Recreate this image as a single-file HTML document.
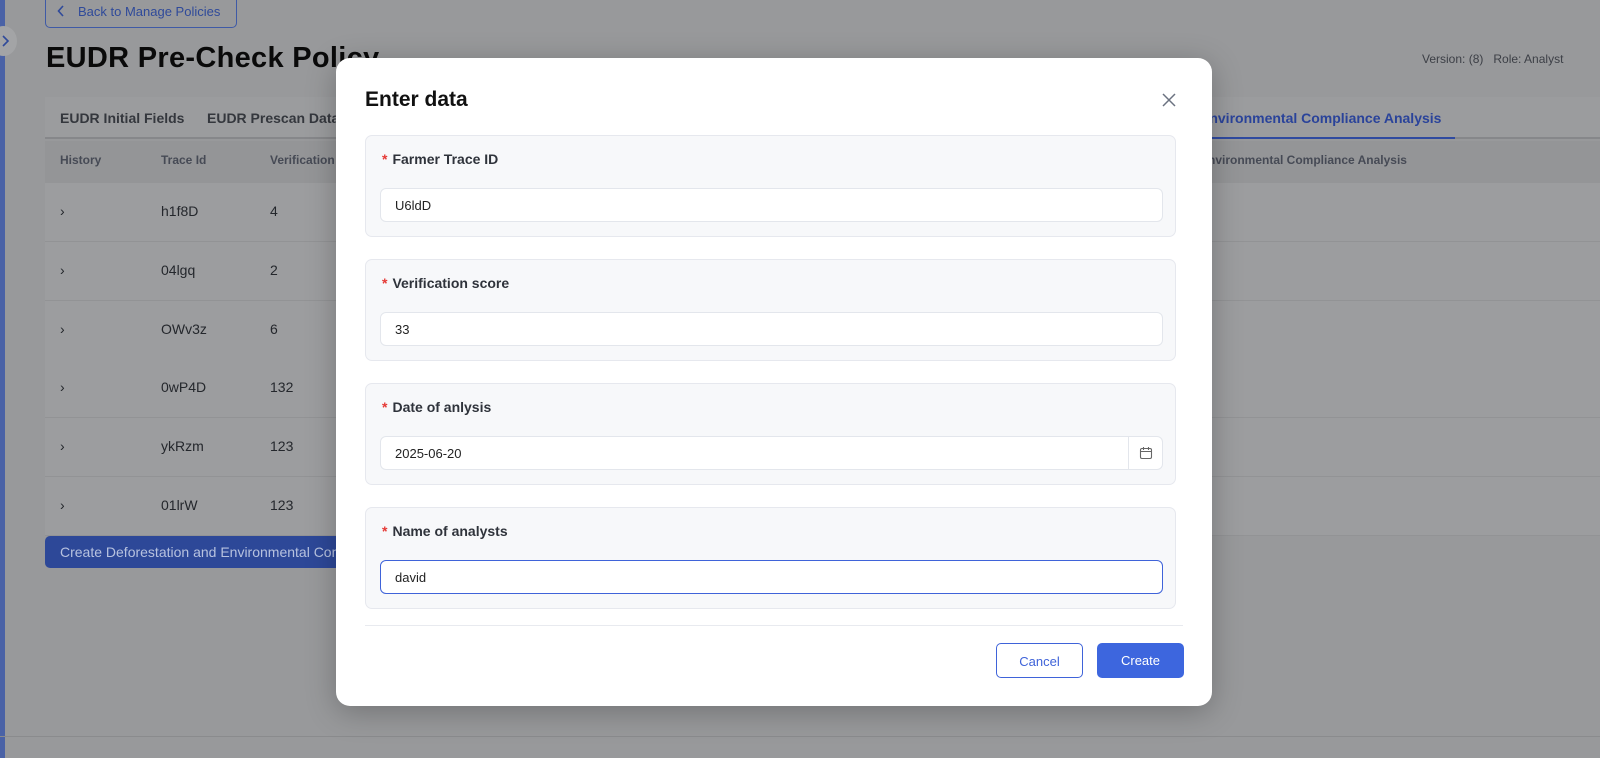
<!DOCTYPE html>
<html><head><style>
*{box-sizing:border-box;margin:0;padding:0}
body{width:1600px;height:758px;overflow:hidden;background:#98999b;font-family:"Liberation Sans",sans-serif;position:relative}
.a{position:absolute}
.side{left:0;top:0;width:5px;height:758px;background:#4a62a6}
.tog{left:-10px;top:26px;width:27px;height:30px;border-radius:50%;background:#a3a4a6}
.back{left:45px;top:-6px;width:192px;height:34px;border:1px solid #3f5aa6;border-radius:5px;color:#2f4a9a;font-size:13px;padding:9px 0 0 32px}
h1{position:absolute;left:46px;top:42px;font-size:29px;font-weight:bold;color:#0a0a0a;letter-spacing:.3px}
.ver{top:52px;left:1422px;font-size:12px;color:#3c3f46;white-space:nowrap}
.tabs{left:45px;top:97px;width:1555px;height:42px;background:#9b9c9e;border-bottom:2px solid #86878a}
.tab{top:110px;font-size:14px;font-weight:bold;color:#34373d}
.hdr{left:45px;top:141px;width:1555px;height:42px;background:#949597}
.hd{top:153px;font-size:12px;font-weight:bold;color:#464a55}
.row{left:45px;width:1555px;height:59px;background:#9c9d9f;border-bottom:1px solid #929395}
.c{font-size:14px;color:#24272c}
.btn{left:45px;top:536px;width:420px;height:32px;background:#2d4898;border-radius:5px;color:#b7c2df;font-size:14px;padding:8px 0 0 15px}
.bot{left:0;top:736px;width:1600px;height:1px;background:#8a8b8d}
.modal{left:336px;top:58px;width:876px;height:648px;background:#fff;border-radius:14px;box-shadow:0 6px 30px rgba(0,0,0,.25)}
.mt{left:29px;top:30px;font-size:21px;font-weight:bold;color:#111}
.sec{left:29px;width:811px;height:102px;background:#f7f8fa;border:1px solid #e6e8ee;border-radius:7px}
.lab{position:absolute;left:16px;top:15px;font-size:14px;font-weight:bold;color:#2f333b}
.lab b{color:#e53935;margin-right:5px}
.inp{position:absolute;left:14px;top:52px;width:783px;height:34px;background:#fff;border:1px solid #e3e6ec;border-radius:6px;font-size:13px;color:#222;padding:9px 0 0 14px}
.cal{position:absolute;right:0;top:0;width:34px;height:32px;border-left:1px solid #e3e6ec}
.div{left:29px;top:567px;width:818px;height:1px;background:#e8eaef}
.b1{left:660px;top:585px;width:87px;height:35px;border:1px solid #3f63d9;border-radius:5px;color:#3f63d9;font-size:13px;text-align:center;padding-top:10px}
.b2{left:761px;top:585px;width:87px;height:35px;background:#3d66de;border-radius:5px;color:#fff;font-size:13px;text-align:center;padding-top:10px}
</style></head><body>
<div class="a side"></div>
<div class="a tog"><svg class="a" style="left:10px;top:8px" width="12" height="14" viewBox="0 0 12 14"><path d="M3 2l5 5-5 5" fill="none" stroke="#2f4a9a" stroke-width="1.6"/></svg></div>
<div class="a back"><svg class="a" style="left:11px;top:10px" width="8" height="12" viewBox="0 0 8 12"><path d="M6 1L1.5 6 6 11" fill="none" stroke="#2f4a9a" stroke-width="1.6"/></svg>Back to Manage Policies</div>
<h1>EUDR Pre-Check Policy</h1>
<div class="a ver">Version: (8)&nbsp;&nbsp;&nbsp;Role: Analyst</div>
<div class="a tabs"></div>
<div class="a tab" style="left:60px">EUDR Initial Fields</div>
<div class="a tab" style="left:207px">EUDR Prescan Data</div>
<div class="a tab" style="left:1200px;color:#2a439a">Environmental Compliance Analysis</div>
<div class="a" style="left:1200px;top:137px;width:255px;height:2px;background:#2f4aa0"></div>
<div class="a hdr"></div>
<div class="a hd" style="left:60px">History</div>
<div class="a hd" style="left:161px">Trace Id</div>
<div class="a hd" style="left:270px">Verification</div>
<div class="a hd" style="left:1200px">Environmental Compliance Analysis</div>
<div class="a row" style="top:183px"></div><div class="a row" style="top:242px"></div><div class="a row" style="top:301px"></div><div class="a row" style="top:359px"></div><div class="a row" style="top:418px"></div><div class="a row" style="top:477px"></div>
<div class="a c" style="left:60px;top:203px">›</div><div class="a c" style="left:161px;top:203px">h1f8D</div><div class="a c" style="left:270px;top:203px">4</div>
<div class="a c" style="left:60px;top:262px">›</div><div class="a c" style="left:161px;top:262px">04lgq</div><div class="a c" style="left:270px;top:262px">2</div>
<div class="a c" style="left:60px;top:321px">›</div><div class="a c" style="left:161px;top:321px">OWv3z</div><div class="a c" style="left:270px;top:321px">6</div>
<div class="a c" style="left:60px;top:379px">›</div><div class="a c" style="left:161px;top:379px">0wP4D</div><div class="a c" style="left:270px;top:379px">132</div>
<div class="a c" style="left:60px;top:438px">›</div><div class="a c" style="left:161px;top:438px">ykRzm</div><div class="a c" style="left:270px;top:438px">123</div>
<div class="a c" style="left:60px;top:497px">›</div><div class="a c" style="left:161px;top:497px">01lrW</div><div class="a c" style="left:270px;top:497px">123</div>
<div class="a btn">Create Deforestation and Environmental Compliance Analysis</div>
<div class="a bot"></div>

<div class="a modal">
<div class="a mt">Enter data</div>
<svg class="a" style="left:826px;top:35px" width="14" height="14" viewBox="0 0 14 14"><path d="M1 1l12 12M13 1L1 13" stroke="#6b7280" stroke-width="1.5"/></svg>
<div class="a sec" style="top:77px"><div class="lab"><b>*</b>Farmer Trace ID</div><div class="inp">U6ldD</div></div>
<div class="a sec" style="top:201px"><div class="lab"><b>*</b>Verification score</div><div class="inp">33</div></div>
<div class="a sec" style="top:325px"><div class="lab"><b>*</b>Date of anlysis</div><div class="inp">2025-06-20<div class="cal"><svg class="a" style="left:10px;top:9px" width="14" height="14" viewBox="0 0 14 14"><rect x="1.5" y="2.5" width="11" height="10" rx="1.5" fill="none" stroke="#666" stroke-width="1.1"/><path d="M1.5 5.5h11M4.5 1v3M9.5 1v3" stroke="#666" stroke-width="1.1"/></svg></div></div></div>
<div class="a sec" style="top:449px"><div class="lab"><b>*</b>Name of analysts</div><div class="inp" style="border-color:#3f63d9">david</div></div>
<div class="a div"></div>
<div class="a b1">Cancel</div>
<div class="a b2">Create</div>
</div>
</body></html>
